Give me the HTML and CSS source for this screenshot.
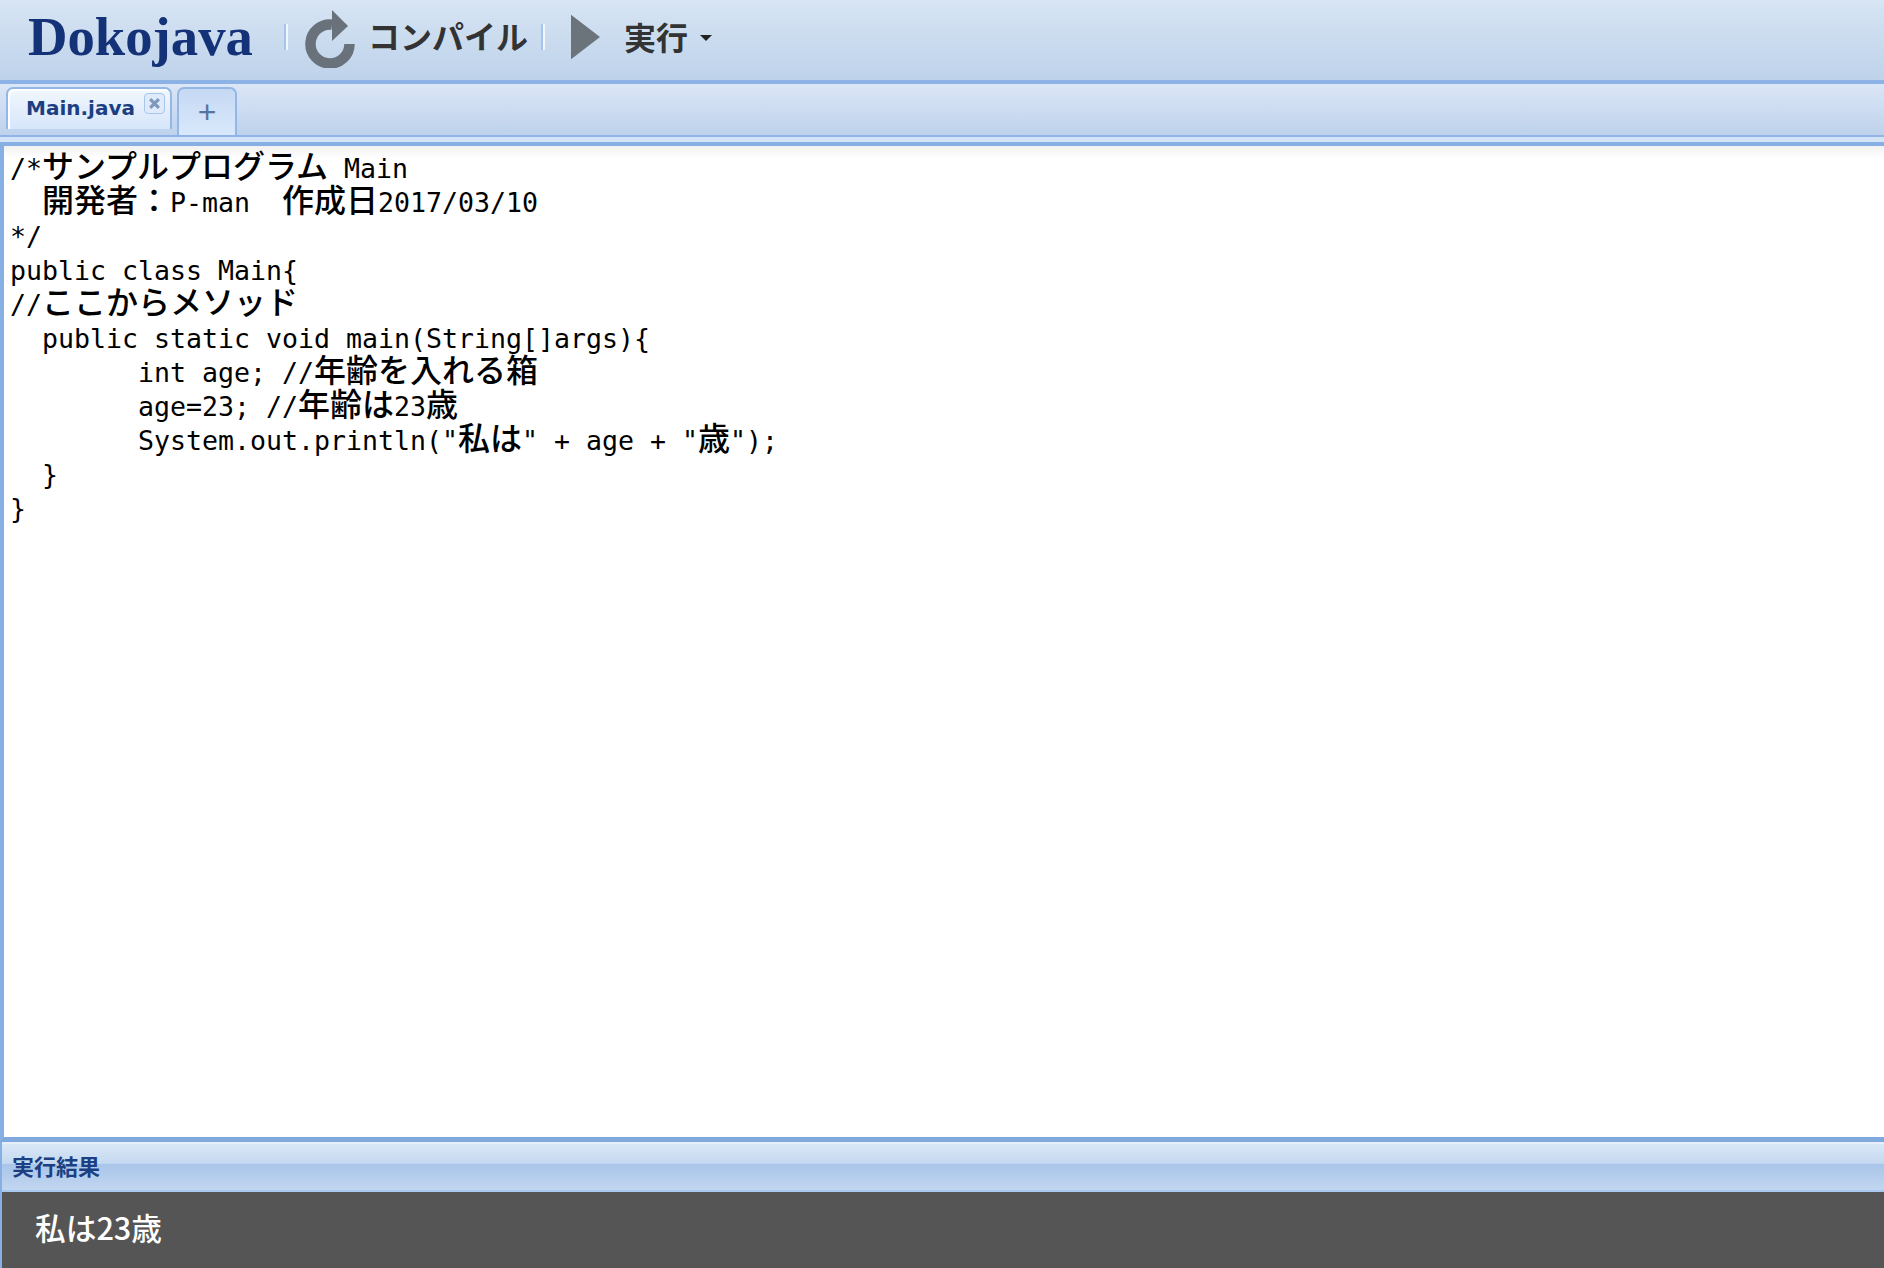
FILE: index.html
```html
<!DOCTYPE html>
<html lang="ja">
<head>
<meta charset="utf-8">
<title>Dokojava</title>
<link rel="stylesheet" href="styles.css">
</head>
<body>
<div class="app">
  <header class="toolbar">
    <div class="logo">Dokojava</div>
    <span class="sep"></span>
    <button class="tool tool-compile">
      <svg class="icon-reload" viewBox="0 0 50 58" aria-hidden="true">
        <path d="M27 14.6 A19.5 19.5 0 1 0 44.5 34" fill="none" stroke="#69717a" stroke-width="10.5"/>
        <path d="M27 0 L43 16 L27 31 Z" fill="#69717a"/>
      </svg>
      <span class="tool-label">コンパイル</span>
    </button>
    <span class="sep sep-two"></span>
    <button class="tool tool-run">
      <svg class="icon-play" viewBox="0 0 30 46" aria-hidden="true"><path d="M0 0 L30 23 L0 46 Z" fill="#6b737b"/></svg>
      <span class="tool-label">実行</span>
      <span class="caret"></span>
    </button>
  </header>
  <nav class="tabbar">
    <div class="tab tab-active">
      <span class="tab-name">Main.java</span>
      <span class="tab-close">
        <svg viewBox="0 0 12 12" aria-hidden="true"><path d="M2 2 L10 10 M10 2 L2 10" stroke="#8098be" stroke-width="3"/></svg>
      </span>
    </div>
    <div class="tab tab-add">+</div>
  </nav>
  <div class="tab-gap"></div>
  <main class="editor">
    <div class="line">/*<span class="ja">サンプルプログラム</span> Main</div>
    <div class="line">  <span class="ja">開発者：</span>P-man<span class="ja">　作成日</span>2017/03/10</div>
    <div class="line">*/</div>
    <div class="line">public class Main{</div>
    <div class="line">//<span class="ja">ここからメソッド</span></div>
    <div class="line">  public static void main(String[]args){</div>
    <div class="line">        int age; //<span class="ja">年齢を入れる箱</span></div>
    <div class="line">        age=23; //<span class="ja">年齢は</span>23<span class="ja">歳</span></div>
    <div class="line">        System.out.println("<span class="ja">私は</span>" + age + "<span class="ja">歳</span>");</div>
    <div class="line">  }</div>
    <div class="line">}</div>
  </main>
  <section class="result">
    <div class="result-head">実行結果</div>
    <div class="result-body">私は23歳</div>
  </section>
</div>
</body>
</html>
```
FILE: styles.css
```css
* { box-sizing: border-box; }
html, body { margin: 0; height: 100%; overflow: hidden; background: #fff; }
body { font-family: "Noto Sans CJK JP", "Noto Sans", sans-serif; }
.app { display: flex; flex-direction: column; height: 1268px; background: #86afe3; }

.toolbar {
  height: 84px;
  flex: none;
  display: flex;
  align-items: center;
  padding: 0 0 4px 28px;
  border-bottom: 4px solid #8cb2e6;
  background: linear-gradient(#d7e5f4, #bed2ea);
}
.logo {
  font: bold 54.7px "Liberation Serif", serif;
  color: #143278;
  width: 256px;
  margin-top: -3px;
}
.sep {
  width: 4px;
  height: 26px;
  margin-top: -2px;
  border-left: 2px solid #a5c5ef;
  border-right: 2px solid #f2f7fd;
}
.tool {
  display: flex;
  align-items: center;
  padding: 0;
  border: 0;
  background: none;
  font: 700 32px "Noto Sans CJK JP", sans-serif;
  color: #333;
}
.tool-compile { margin-left: 17px; }
.icon-reload { width: 50px; height: 58px; margin-top: 2px; filter: blur(0.7px); }
.tool-compile .tool-label { margin-left: 13px; margin-top: -6px; }
.sep-two { margin-left: 13px; }
.tool-run { margin-left: 26px; }
.icon-play { width: 29px; height: 46px; margin-top: -2px; filter: blur(0.7px); }
.tool-run .tool-label { margin-left: 24px; margin-top: -4px; }
.caret {
  margin-left: 12px;
  border-left: 6px solid transparent;
  border-right: 6px solid transparent;
  border-top: 6px solid #222;
}

.tabbar {
  height: 53px;
  flex: none;
  display: flex;
  align-items: flex-start;
  gap: 5px;
  padding: 3px 0 0 6px;
  border-bottom: 2px solid #8fb4e6;
  background: linear-gradient(#dbe6f6, #bed2ec);
}
.tab {
  border: 2px solid #93b7e6;
  border-bottom: 0;
  border-radius: 7px 7px 0 0;
  background: linear-gradient(#f2f7fd, #d6e6fa);
}
.tab-active {
  width: 166px;
  height: 42px;
  display: flex;
  position: relative;
  padding: 7px 0 0 18px;
  box-shadow: inset 2px 2px 0 #fff;
}
.tab-name {
  font: bold 20px "DejaVu Sans", sans-serif;
  color: #1b3f82;
}
.tab-close {
  position: absolute;
  top: 4px;
  right: 5px;
  width: 21px;
  height: 21px;
  display: flex;
  padding: 3px;
  border: 1px solid #a8c6ec;
  border-radius: 4px;
  background: #dfeafa;
}
.tab-close svg { width: 100%; height: 100%; }
.tab-add {
  width: 60px;
  height: 48px;
  text-align: center;
  font: 32px/46px "Liberation Sans", sans-serif;
  color: #55749f;
  background: linear-gradient(#c6d9f3, #d9e8fc);
}
.tab-gap { height: 5px; flex: none; background: #d5e3f7; }

.editor {
  flex: 1;
  min-height: 0;
  margin: 0;
  border-top: 4px solid #86afe3;
  border-left: 4px solid #86afe3;
  border-bottom: 5px solid #7fa9dd;
  padding: 6px 0 0 6px;
  background: linear-gradient(#f1f1f1, #fff 12px);
  color: #000;
  font: 26.58px "DejaVu Sans Mono", monospace;
}
.line { height: 34px; line-height: 34px; white-space: pre; }
.ja {
  font-family: "Noto Sans CJK JP", sans-serif;
  font-size: 32px;
  font-weight: 500;
  line-height: 0;
}

.result { flex: none; }
.result-head {
  height: 50px;
  margin-left: 2px;
  padding: 4px 0 0 10px;
  border-top: 2px solid #e6eff9;
  border-bottom: 2px solid #a8c8f0;
  font: bold 22px/34px "Noto Sans CJK JP", sans-serif;
  color: #1b3f82;
  background: linear-gradient(#dae7f6, #c5d9f1 42%, #a9c5e9 44%, #c2d6f0);
}
.result-body {
  height: 76px;
  margin-left: 2px;
  padding-left: 33px;
  background: #555;
  color: #fff;
  font: 500 30.7px/70px "Noto Sans CJK JP", sans-serif;
}
```
